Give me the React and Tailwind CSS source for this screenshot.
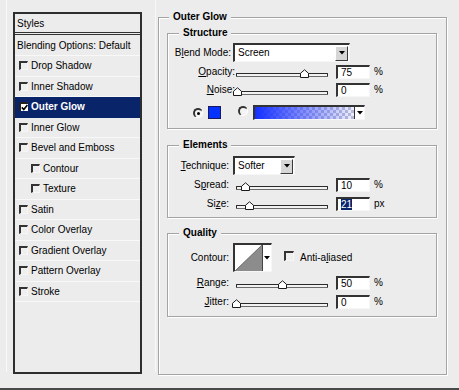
import React from 'react';

const sunken =
  'border-t-2 border-l-2 border-r border-b border-[#333] border-r-[#f6f6f6] border-b-[#f6f6f6]';

const styleItems = [
  { label: 'Drop Shadow' },
  { label: 'Inner Shadow' },
  { label: 'Outer Glow', checked: true, active: true },
  { label: 'Inner Glow' },
  { label: 'Bevel and Emboss' },
  { label: 'Contour', indent: true },
  { label: 'Texture', indent: true },
  { label: 'Satin' },
  { label: 'Color Overlay' },
  { label: 'Gradient Overlay' },
  { label: 'Pattern Overlay' },
  { label: 'Stroke' },
];

function CheckBox({ checked, size = 'w-[9px] h-[9px]' }) {
  if (checked) {
    return (
      <span className={`relative inline-flex items-center justify-center shrink-0 bg-white ${size} border-t-2 border-l-2 border-[#222]`}>
        <svg width="7" height="7" viewBox="0 0 7 7">
          <path d="M0.8 3.4L2.8 5.6L6.4 1" fill="none" stroke="#000" strokeWidth="1.6" />
        </svg>
      </span>
    );
  }
  return <span className={`inline-block shrink-0 bg-[#efefef] ${size} ${sunken}`} />;
}

function Radio({ checked }) {
  return (
    <span className="inline-flex items-center justify-center shrink-0 w-[10px] h-[10px] rounded-full bg-[#f4f4f4] border-t-2 border-l-2 border-r border-b border-[#333] border-r-white border-b-white">
      {checked && <span className="w-[3px] h-[3px] rounded-full bg-black" />}
    </span>
  );
}

function Arrow() {
  return (
    <svg width="6" height="4" viewBox="0 0 6 4">
      <path d="M0 0H6L3 3.5Z" fill="#000" />
    </svg>
  );
}

function Select({ width, value }) {
  return (
    <div className={`${width} h-[19px] flex items-center bg-white ${sunken}`}>
      <span className="flex-1 pl-[3px] leading-[12px]">{value}</span>
      <div className="w-[13px] h-[15px] mr-[1px] bg-[#d6d6d6] border border-t-white border-l-white border-r-[#3a3a3a] border-b-[#3a3a3a] flex items-center justify-center">
        <Arrow />
      </div>
    </div>
  );
}

function Slider({ value }) {
  const pos = Math.round(value * 91);
  return (
    <div className="relative w-[92px] h-[14px] shrink-0">
      <div className="mt-[8px] h-[4px] border border-[#2a2a2a] border-b-[#6a6a6a] bg-[#f2f2f2] rounded-[1px]" />
      <svg className="absolute top-[4px]" style={{ left: pos - 4 }} width="9" height="9" viewBox="0 0 9 9">
        <path d="M0.5 8.5V4.3L4.5 0.8L8.5 4.3V8.5Z" fill="#fff" stroke="#1a1a1a" />
      </svg>
    </div>
  );
}

function Field({ children }) {
  return (
    <div className={`ml-[8px] w-[34px] h-[14px] bg-white pl-[3px] leading-[12px] ${sunken}`}>
      {children}
    </div>
  );
}

function SliderRow({ label, labelWidth, gap, value, field, unit = '%', className = '' }) {
  return (
    <div className={`flex items-start h-[14px] ${className}`}>
      <div className={`${labelWidth} ${gap} text-right leading-[14px] shrink-0`}>{label}</div>
      <Slider value={value} />
      <Field>{field}</Field>
      <span className="ml-[4px] leading-[14px]">{unit}</span>
    </div>
  );
}

function Group({ title, className = '', children }) {
  return (
    <fieldset className={`border border-[#a4a4a4] shadow-[inset_1px_1px_0_#fff,1px_1px_0_#fff] ${className}`}>
      <legend className="ml-[11px] px-[4px] bg-[#ececec] font-bold leading-[12px]">{title}</legend>
      {children}
    </fieldset>
  );
}

export default function App() {
  return (
    <div className="w-[459px] h-[390px] bg-[#ececec] flex flex-col text-[10px] text-black font-['Liberation_Sans',Arial,sans-serif]">
      <div className="h-[388px] flex">
        {/* styles list */}
        <div className="ml-[6px] w-[150px] h-[372px] border-x border-[#f8f8f8] pt-[12px] pl-[6px]">
          <div className="w-[129px] h-[362px] border-2 border-[#2e2e2e] flex flex-col">
            <div className="h-[21px] shrink-0 border-b-[3px] border-double border-[#333] pl-[2px] flex items-center">
              Styles
            </div>
            <div className="h-[21px] shrink-0 border-b border-[#f8f8f8] pl-[2px] flex items-center">
              Blending Options: Default
            </div>
            {styleItems.map((item) => (
              <div
                key={item.label}
                className={`h-[20.5px] shrink-0 flex items-center border-b ${
                  item.active ? 'bg-[#0a246a] text-white font-bold border-[#0a246a]' : 'border-[#f8f8f8]'
                } ${item.indent ? 'pl-[16px]' : 'pl-[4px]'}`}
              >
                <CheckBox checked={item.checked} />
                <span className="ml-[3px]">{item.label}</span>
              </div>
            ))}
          </div>
        </div>

        {/* settings */}
        <fieldset className="ml-[2px] mt-[11px] w-[289px] h-[364px] pl-[8px] pr-[9px] border border-[#a4a4a4] shadow-[inset_1px_1px_0_#fff,1px_1px_0_#fff]">
          <legend className="ml-[2px] px-[4px] bg-[#ececec] font-bold leading-[12px]">Outer Glow</legend>

          <Group title="Structure" className="mt-[4px] h-[102px]">
            <div className="flex items-center h-[19px] mt-[4px]">
              <div className="w-[63px] text-right mr-[2px]">
                B<u>l</u>end Mode:
              </div>
              <Select width="w-[117px]" value="Screen" />
            </div>
            <SliderRow className="mt-[3px]" label={<><u>O</u>pacity:</>} labelWidth="w-[67px]" gap="mr-[1px]" value={0.75} field="75" />
            <SliderRow className="mt-[4px]" label={<><u>N</u>oise:</>} labelWidth="w-[67px]" gap="mr-[1px]" value={0.01} field="0" />
            <div className="flex items-center h-[15px] mt-[8px] pl-[25px]">
              <Radio checked />
              <span className="ml-[5px] w-[13px] h-[13px] bg-[#0433ff] border border-[#1a1a5a]" />
              <span className="ml-[17px]">
                <Radio />
              </span>
              <div className={`ml-[5px] flex h-[15px] ${sunken}`}>
                <div className="w-[99px] h-full bg-[image:linear-gradient(to_right,#1430ff_0%,rgba(50,70,255,0.7)_40%,rgba(90,110,255,0.1)_100%),repeating-conic-gradient(#c4c4d4_0_25%,#ffffff_0_50%)] bg-[length:100%_100%,6px_6px]" />
                <div className="w-[10px] bg-white border-l border-[#333] flex items-center justify-center">
                  <Arrow />
                </div>
              </div>
            </div>
          </Group>

          <Group title="Elements" className="mt-[10px] h-[79px]">
            <div className="flex items-center h-[19px] mt-[5px]">
              <div className="w-[61px] text-right mr-[4px]">
                <u>T</u>echnique:
              </div>
              <Select width="w-[62px]" value="Softer" />
            </div>
            <SliderRow className="mt-[3px]" label={<>S<u>p</u>read:</>} labelWidth="w-[61px]" gap="mr-[7px]" value={0.1} field="10" />
            <SliderRow
              className="mt-[5px]"
              label={<>Si<u>z</u>e:</>}
              labelWidth="w-[61px]"
              gap="mr-[7px]"
              value={0.14}
              field={<span className="bg-[#0a246a] text-white">21</span>}
              unit="px"
            />
          </Group>

          <Group title="Quality" className="mt-[9px] h-[90px]">
            <div className="flex items-center h-[29px] mt-[4px]">
              <div className="w-[61px] text-right mr-[4px]">Contour:</div>
              <div className={`flex w-[39px] h-[29px] bg-white ${sunken}`}>
                <svg width="27" height="26" viewBox="0 0 27 26" className="shrink-0">
                  <path d="M0 26L27 0V26Z" fill="#8c8c8c" />
                  <path d="M0 26L27 0" stroke="#555" strokeWidth="0.8" />
                </svg>
                <div className="flex-1 border-l border-[#444] flex items-center justify-center">
                  <Arrow />
                </div>
              </div>
              <span className="ml-[12px]">
                <CheckBox size="w-[10px] h-[10px]" />
              </span>
              <span className="ml-[6px]">
                Anti-a<u>l</u>iased
              </span>
            </div>
            <SliderRow className="mt-[4px]" label={<><u>R</u>ange:</>} labelWidth="w-[61px]" gap="mr-[7px]" value={0.5} field="50" />
            <SliderRow className="mt-[5px]" label={<><u>J</u>itter:</>} labelWidth="w-[61px]" gap="mr-[7px]" value={0} field="0" />
          </Group>
        </fieldset>
      </div>
      <div className="h-[2px] bg-[#4a4a4a]" />
    </div>
  );
}
